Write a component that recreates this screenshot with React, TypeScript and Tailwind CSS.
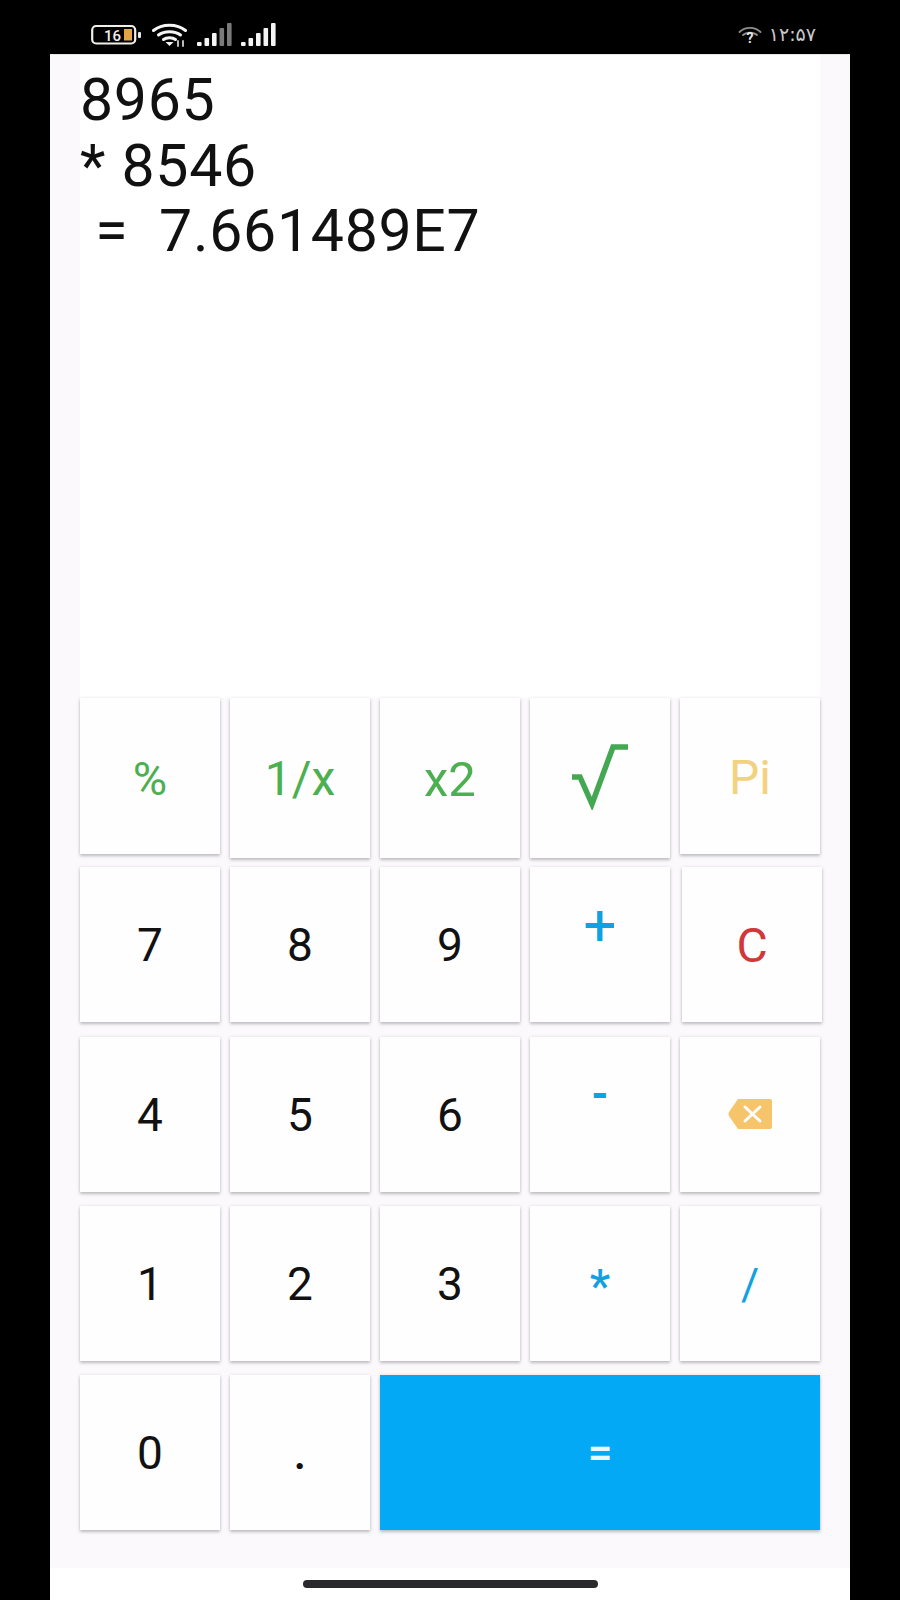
const sans = "font-['Roboto','Liberation_Sans',sans-serif]";

type KeyProps = {
  label?: string;
  className?: string;
  textClass?: string;
  children?: React.ReactNode;
};

function Key({ label, className = "", textClass = "", children }: KeyProps) {
  return (
    <div className={`flex items-center justify-center bg-[#fefefe] shadow-[0_2px_3px_rgba(90,85,95,0.35),0_0_3px_rgba(90,85,95,0.12)] ${className}`}>
      {children ?? <span className={`${sans} leading-none ${textClass}`}>{label}</span>}
    </div>
  );
}

function Signal({ dim = false }: { dim?: boolean }) {
  const bars = [
    { x: 0, h: 4 },
    { x: 7.5, h: 8 },
    { x: 15, h: 13 },
    { x: 22.5, h: 18 },
    { x: 30, h: 23 },
  ];
  return (
    <svg width="35" height="23" viewBox="0 0 35 23">
      {bars.map((b, i) => (
        <rect key={b.x} x={b.x} y={23 - b.h} width="4.6" height={b.h} rx="1" fill={dim && i > 2 ? "#7a7a7a" : "#f4f4f4"} />
      ))}
    </svg>
  );
}

function StatusBar() {
  return (
    <div className="h-[54px] flex items-center justify-between pl-[91px] pr-[84px] pt-[15px] bg-black shrink-0">
      <div className="flex items-center">
        <svg width="52" height="22" viewBox="0 0 52 22" className="mr-[9px]">
          <rect x="1.2" y="2" width="43" height="17.5" rx="4" fill="none" stroke="#f2efe6" strokeWidth="2.2" />
          <rect x="33" y="5" width="8" height="11.5" fill="#e2a445" />
          <rect x="47" y="8" width="3" height="6" rx="1" fill="#e8e8e8" />
          <text x="13" y="16.5" fontFamily="Roboto, sans-serif" fontSize="15" fontWeight="500" fill="#efefef">16</text>
        </svg>
        <svg width="36" height="24" viewBox="0 0 36 24" className="mr-[9px]" fill="none" stroke="#f5f5f5" strokeWidth="3" strokeLinecap="round">
          <path d="M1.5 7.5 C10 0.5 25 0.5 33.5 7.5" />
          <path d="M6.5 12 C12 7.5 23 7.5 28.5 12" />
          <path d="M11.5 16.5 C14.5 14 20.5 14 23.5 16.5" />
          <path d="M13.5 19 L17.5 23 L21.5 19 Z" fill="#f5f5f5" stroke="none" />
          <path d="M26 23 V18 M31 23 V18" stroke="#cfcfcf" strokeWidth="1.8" />
        </svg>
        <div className="mr-[9px]"><Signal dim /></div>
        <Signal />
      </div>
      <div className="flex items-center gap-[7px] text-[#c9c9c9]">
        <svg width="24" height="20" viewBox="0 0 24 20" fill="none" stroke="#8d8d8d" strokeWidth="1.8" strokeLinecap="round">
          <path d="M1.5 7 C7 1.5 17 1.5 22.5 7" />
          <path d="M5 10 C8 7 16 7 19 10" />
          <text x="8.5" y="18" fontFamily="Roboto, sans-serif" fontSize="14" fontWeight="700" fill="#e4e4e4" stroke="none">?</text>
        </svg>
        <span className="font-['DejaVu_Sans',sans-serif] text-[19px] leading-none">۱۲:۵۷</span>
      </div>
    </div>
  );
}

export default function App() {
  const digit = "text-[46px] text-[#111]";
  const green = "text-[#4caf50]";
  const blue = "text-[#12a0e4]";

  return (
    <div className="h-[1600px] bg-black flex flex-col">
      <StatusBar />
      <div className="mx-[50px] flex-1 flex flex-col bg-[#fbf9fc] border-t border-[#e6e6e6]">
        <div className="flex-1 flex flex-col px-[30px]">
          <div className="h-[643px] bg-white shrink-0 pt-[12px]">
            <div className={`${sans} text-[59px] leading-[65.5px] text-[#111] tracking-[0.7px] whitespace-pre`}>
              <div>8965</div>
              <div>* 8546</div>
              <div> =  7.661489E7</div>
            </div>
          </div>
          <div className="grid grid-cols-[140px_140px_140px_140px_140px] gap-x-[10px]">
            <Key label="%" className="h-[156px]" textClass={`text-[47px] pt-[4px] ${green}`} />
            <Key label="1/x" className="h-[160px]" textClass={`text-[48px] pt-[2px] ${green}`} />
            <Key label="x2" className="h-[160px]" textClass={`text-[49px] pt-[2px] ${green}`} />
            <Key className="h-[160px]">
              <svg width="56" height="66" viewBox="0 0 56 66" fill="none" stroke="#43a851" strokeWidth="5.5" className="mb-[2px]">
                <path d="M0 33 L8 33 L20 60 L41 3 H56" />
              </svg>
            </Key>
            <Key label="Pi" className="h-[156px]" textClass="text-[48px] pt-[3px] text-[#f3d27f]" />
          </div>
          <div className="grid grid-cols-[140px_140px_140px_140px_140px] gap-x-[10px] mt-[9px]">
            <Key label="7" className="h-[155px]" textClass={digit} />
            <Key label="8" className="h-[155px]" textClass={digit} />
            <Key label="9" className="h-[155px]" textClass={digit} />
            <Key label="+" className="h-[155px] pb-[40px]" textClass={`text-[58px] ${blue}`} />
            <Key label="C" className="h-[155px] ml-[2px] -mr-[2px]" textClass="text-[48px] pt-[2px] text-[#d0383a]" />
          </div>
          <div className="grid grid-cols-[140px_140px_140px_140px_140px] gap-x-[10px] mt-[15px]">
            <Key label="4" className="h-[155px]" textClass={digit} />
            <Key label="5" className="h-[155px]" textClass={digit} />
            <Key label="6" className="h-[155px]" textClass={digit} />
            <Key label="-" className="h-[155px] pb-[42px]" textClass={`text-[44px] font-bold ${blue}`} />
            <Key className="h-[155px]">
              <svg width="46" height="32" viewBox="0 0 46 32" className="mb-[2px]">
                <path d="M11 1 H43 a2 2 0 0 1 2 2 V29 a2 2 0 0 1 -2 2 H11 L2 18 Q1 16 2 14 Z" fill="#f6c46a" />
                <path d="M18 9 L33 23 M33 9 L18 23" stroke="#fff" strokeWidth="3" strokeLinecap="round" />
              </svg>
            </Key>
          </div>
          <div className="grid grid-cols-[140px_140px_140px_140px_140px] gap-x-[10px] mt-[14px]">
            <Key label="1" className="h-[155px]" textClass={digit} />
            <Key label="2" className="h-[155px]" textClass={digit} />
            <Key label="3" className="h-[155px]" textClass={digit} />
            <Key label="*" className="h-[155px]" textClass={`text-[46px] font-medium pt-[4px] ${blue}`} />
            <Key label="/" className="h-[155px]" textClass={`text-[44px] pt-[2px] ${blue}`} />
          </div>
          <div className="grid grid-cols-[140px_140px_140px_140px_140px] gap-x-[10px] mt-[14px]">
            <Key label="0" className="h-[155px]" textClass={digit} />
            <Key label="." className="h-[155px]" textClass={`${digit} font-medium`} />
            <Key label="=" className="col-span-3 h-[155px] !bg-[#03a9f4]" textClass="text-[44px] font-medium text-[#e8f8ff]" />
          </div>
        </div>
        <div className="h-[32px] bg-white flex items-center justify-center shrink-0 mt-auto">
          <div className="w-[295px] h-[8px] rounded-full bg-[#2a2a2c]" />
        </div>
      </div>
    </div>
  );
}
